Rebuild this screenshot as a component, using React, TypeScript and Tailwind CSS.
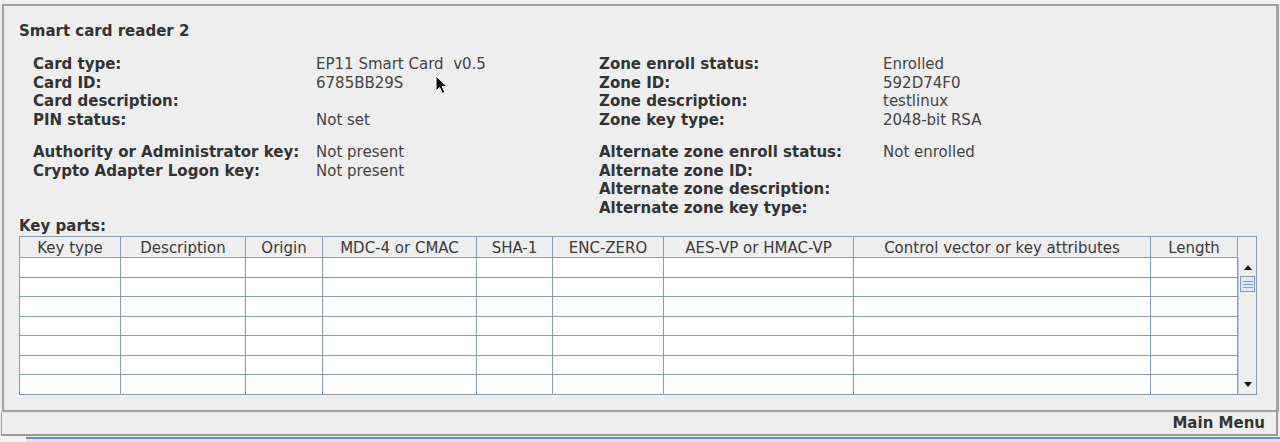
import React from "react";

const leftTop = [
  ["Card type:", "EP11 Smart Card  v0.5", "Zone enroll status:", "Enrolled"],
  ["Card ID:", "6785BB29S", "Zone ID:", "592D74F0"],
  ["Card description:", "", "Zone description:", "testlinux"],
  ["PIN status:", "Not set", "Zone key type:", "2048-bit RSA"],
];

const leftBottom = [
  ["Authority or Administrator key:", "Not present", "Alternate zone enroll status:", "Not enrolled"],
  ["Crypto Adapter Logon key:", "Not present", "Alternate zone ID:", ""],
  ["", "", "Alternate zone description:", ""],
  ["", "", "Alternate zone key type:", ""],
];

const columns = [
  { name: "Key type", w: "w-[101px]" },
  { name: "Description", w: "w-[125px]" },
  { name: "Origin", w: "w-[77px]" },
  { name: "MDC-4 or CMAC", w: "w-[154px]" },
  { name: "SHA-1", w: "w-[76px]" },
  { name: "ENC-ZERO", w: "w-[111px]" },
  { name: "AES-VP or HMAC-VP", w: "w-[190px]" },
  { name: "Control vector or key attributes", w: "w-[297px]" },
  { name: "Length", w: "w-[87px]" },
];

const rows = [0, 1, 2, 3, 4, 5, 6];

const InfoGroup = ({ data }: { data: string[][] }) => {
  return (
    <div className="grid grid-cols-[283px_283px_284px_1fr] leading-[18.5px]">
      {data.map((r, i) => (
        <React.Fragment key={i}>
          <div className="h-[18.5px] font-bold text-[#333]">{r[0]}</div>
          <div className="h-[18.5px] whitespace-pre text-[#444]">{r[1]}</div>
          <div className="h-[18.5px] font-bold text-[#333]">{r[2]}</div>
          <div className="h-[18.5px] text-[#444]">{r[3]}</div>
        </React.Fragment>
      ))}
    </div>
  );
};

const Arrow = ({ up }: { up: boolean }) => (
  <svg width="8" height="5" viewBox="0 0 8 5">
    {up ? <polygon points="0,5 8,5 4,0" fill="#111" /> : <polygon points="0,0 8,0 4,5" fill="#111" />}
  </svg>
);

const App = () => {
  return (
    <div className="relative flex h-[442px] w-[1280px] flex-col overflow-hidden bg-[#eeeeee] font-['DejaVu_Sans',sans-serif] text-[15px] text-[#333]">
      <div className="h-[4px] bg-[#f2f2f2]" />
      <div className="ml-[2px] mr-[1px] h-[408px] border-2 border-r-[3px] border-[#a3a3a3] bg-[#eeeeee] pl-[15px] pt-[16px]">
        <div className="h-[18.5px] font-bold leading-[18.5px] text-[#333]">Smart card reader 2</div>
        <div className="mt-[14.5px] pl-[14px]">
          <InfoGroup data={leftTop} />
          <div className="mt-[14px]">
            <InfoGroup data={leftBottom} />
          </div>
        </div>
        <div className="h-[18.5px] font-bold leading-[18.5px] text-[#333]">Key parts:</div>
        <div className="mt-[0.5px] flex w-[1238px] border border-b-0 border-[#8a9bb4]">
          <div className="flex flex-col">
            <div className="flex h-[21px] border-b border-[#8a9bb4] bg-[#eeeeee]">
              {columns.map((c) => (
                <div
                  key={c.name}
                  className={`${c.w} flex items-center justify-center border-r border-[#8a9bb4] pt-[1px] leading-[20px] text-[#3a3a3a]`}
                >
                  {c.name}
                </div>
              ))}
            </div>
            {rows.map((r) => (
              <div key={r} className="flex h-[19.5px] border-b border-[#8a9bb4] bg-white">
                {columns.map((c) => (
                  <div key={c.name} className={`${c.w} border-r border-[#8a9bb4]`} />
                ))}
              </div>
            ))}
          </div>
          <div className="flex w-[18px] flex-col border-b border-[#8a9bb4]">
            <div className="h-[21px] bg-[#eeeeee]" />
            <div className="flex flex-1 flex-col border-l border-[#c4d0e0] bg-[#eeeeee]">
              <div className="flex h-[18px] items-center justify-center">
                <Arrow up={true} />
              </div>
              <div className="mx-[1px] flex h-[16px] flex-col items-center justify-center gap-[2px] border border-[#7f9cc6] bg-[#dfe8f3]">
                <div className="h-px w-[10px] bg-[#7f9cc6]" />
                <div className="h-px w-[10px] bg-[#7f9cc6]" />
                <div className="h-px w-[10px] bg-[#7f9cc6]" />
              </div>
              <div className="flex-1" />
              <div className="flex h-[18px] items-center justify-center">
                <Arrow up={false} />
              </div>
            </div>
          </div>
        </div>
      </div>
      <div className="ml-[1px] mr-[2px] flex h-[24px] items-center justify-end border-b-2 border-l border-r-2 border-[#9c9c9c] pr-[11px] font-bold leading-[18px] text-[#333]">
        Main Menu
      </div>
      <div className="flex h-[6px] bg-[#e6e6e6]">
        <div className="w-[26px] bg-[#f4f4f4]" />
        <div className="mt-[1px] h-[2px] flex-1 bg-[#5b97d8]" />
      </div>
      <svg className="absolute left-[435px] top-[75px]" width="13" height="20" viewBox="0 0 13 20">
        <path d="M1 1 L1 16 L4.5 12.5 L7.5 18.5 L10 17.3 L7 11.5 L12 11.5 Z" fill="#111" stroke="#fff" strokeWidth="1" />
      </svg>
    </div>
  );
};

export default App;
